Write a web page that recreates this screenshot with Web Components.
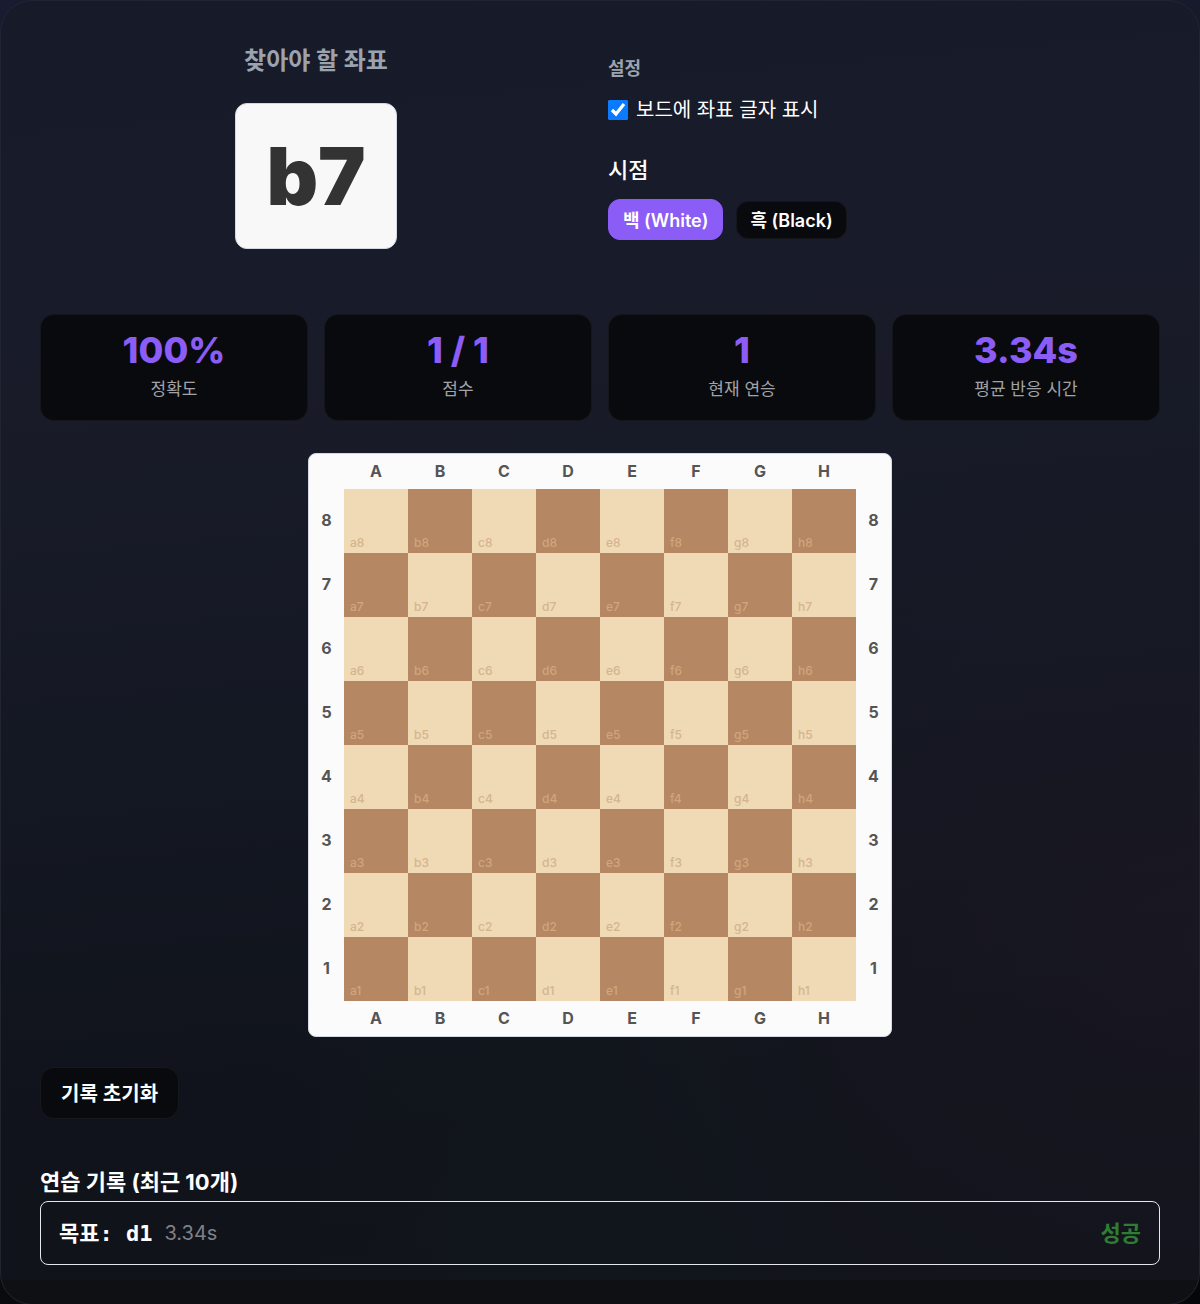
<!DOCTYPE html>
<html lang="ko">
<head>
<meta charset="utf-8">
<meta name="viewport" content="width=device-width, initial-scale=1">
<title>좌표 연습</title>
<style>
    * { box-sizing: border-box; }
    body {
        margin: 0;
        min-height: 100vh;
        background: linear-gradient(170deg, #191b31 0%, #12151f 50%, #050608 100%);
        color: #fff;
        font-family: Inter, "Noto Sans CJK KR", sans-serif;
        font-size: 20px;
    }
</style>
</head>
<body>
<coord-trainer>
    <target-square slot="target" value="b7">찾아야 할 좌표</target-square>
    <trainer-settings slot="settings"></trainer-settings>
    <stat-card slot="stats" value="100%">정확도</stat-card>
    <stat-card slot="stats" value="1 / 1">점수</stat-card>
    <stat-card slot="stats" value="1">현재 연승</stat-card>
    <stat-card slot="stats" value="3.34s">평균 반응 시간</stat-card>
    <chess-board slot="board"></chess-board>
    <practice-log slot="log">
        <log-entry target="d1" time="3.34s">성공</log-entry>
    </practice-log>
</coord-trainer>

<script>
class CoordTrainer extends HTMLElement {
    constructor() {
        super();
        this.attachShadow({ mode: "open" });
    }

    connectedCallback() {
        this.shadowRoot.innerHTML = `
        <style>
        * { box-sizing: border-box; }
        :host { display: block; }
        main {
            min-height: 100vh;
            padding: 39px;
            border: 1px solid #22252f;
            border-radius: 32px;
            background:
                linear-gradient(#0f1013, #0f1013) bottom / 100% 24px no-repeat,
                radial-gradient(ellipse at 100% 72%, #1c1824aa 0%, transparent 40%),
                radial-gradient(ellipse at 50% 92%, #11191d88 0%, transparent 40%),
                linear-gradient(175deg, #171b29 0%, #191b29 28%, #141823 55%, #10131b 80%, #11131a 100%);
        }
        .top {
            display: grid;
            grid-template-columns: 1fr 1fr;
            gap: 16px;
            margin-bottom: 65px;
        }
        .stats {
            display: grid;
            grid-template-columns: repeat(4, 1fr);
            gap: 16px;
            margin-bottom: 32px;
        }
        .reset {
            display: block;
            margin: 30px 0 44px;
            height: 52px;
            padding: 0 20px 2px;
            border: 1px solid #15181c;
            border-radius: 14px;
            background: #090a0d;
            color: #fff;
            font: inherit;
            font-weight: 600;
            cursor: pointer;
        }
        </style>
        <main>
            <section class="top">
                <slot name="target"></slot>
                <slot name="settings"></slot>
            </section>
            <section class="stats"><slot name="stats"></slot></section>
            <slot name="board"></slot>
            <button class="reset" type="button">기록 초기화</button>
            <slot name="log"></slot>
        </main>
        `;
    }
}

class TargetSquare extends HTMLElement {
    constructor() {
        super();
        this.attachShadow({ mode: "open" });
    }

    connectedCallback() {
        this.shadowRoot.innerHTML = `
        <style>
        :host {
            display: flex;
            flex-direction: column;
            align-items: center;
        }
        h2 {
            margin: 3px 0 24px;
            color: #9ca3af;
            font-size: 24px;
            font-weight: 700;
            line-height: 36px;
        }
        .value {
            padding: 0 30px;
            border: 1px solid #d5d7e2;
            border-radius: 12px;
            background: #f8f8f8;
            color: #333;
            font-size: 80px;
            font-weight: 900;
            line-height: 144px;
        }
        </style>
        <h2><slot></slot></h2>
        <div class="value">${this.getAttribute("value")}</div>
        `;
    }
}

class TrainerSettings extends HTMLElement {
    constructor() {
        super();
        this.attachShadow({ mode: "open" });
    }

    connectedCallback() {
        this.render();
    }

    render() {
        this.shadowRoot.innerHTML = `
        <style>
        :host { display: block; }
        h3 {
            margin: 15px 0 13px;
            color: #9ca3af;
            font-size: 18px;
            font-weight: 600;
            line-height: 28px;
        }
        label {
            display: flex;
            align-items: center;
            gap: 8px;
            line-height: 28px;
        }
        input {
            width: 20px;
            height: 20px;
            margin: 0;
            accent-color: #0a7aff;
        }
        h4 {
            margin: 30px 0 13px;
            font-size: 22px;
            font-weight: 500;
            line-height: 32px;
        }
        .sides {
            display: flex;
            align-items: center;
            gap: 13px;
        }
        button {
            height: 38px;
            padding: 0 13px 2px;
            border: 1px solid #14161b;
            border-radius: 12px;
            background: #090a0d;
            color: #fff;
            font: inherit;
            font-size: 18px;
            font-weight: 600;
            cursor: pointer;
        }
        button.active {
            height: 41px;
            padding: 0 14px 2px;
            border-color: #8b5cf6;
            background: #8b5cf6;
        }
        </style>
        <h3>설정</h3>
        <label><input type="checkbox" checked>보드에 좌표 글자 표시</label>
        <h4>시점</h4>
        <div class="sides">
            <button type="button" class="active">백 (White)</button>
            <button type="button">흑 (Black)</button>
        </div>
        `;

        const buttons = this.shadowRoot.querySelectorAll("button");
        buttons.forEach((btn) => {
            btn.addEventListener("click", () => {
                buttons.forEach((b) => b.classList.toggle("active", b === btn));
            });
        });
    }
}

class StatCard extends HTMLElement {
    constructor() {
        super();
        this.attachShadow({ mode: "open" });
    }

    connectedCallback() {
        this.shadowRoot.innerHTML = `
        <style>
        :host {
            display: block;
            box-sizing: border-box;
            padding: 15px 8px 17px;
            border: 1px solid #14161b;
            border-radius: 14px;
            background: #090a0d;
            text-align: center;
        }
        .value {
            color: #8b5cf6;
            font-size: 36px;
            font-weight: 800;
            line-height: 40px;
        }
        .label {
            margin-top: 5px;
            color: #a1a3a8;
            font-size: 17px;
            line-height: 28px;
        }
        </style>
        <div class="value">${this.getAttribute("value")}</div>
        <div class="label"><slot></slot></div>
        `;
    }
}

class ChessBoard extends HTMLElement {
    constructor() {
        super();
        this.attachShadow({ mode: "open" });
        this.files = ["a", "b", "c", "d", "e", "f", "g", "h"];
        this.ranks = [8, 7, 6, 5, 4, 3, 2, 1];
    }

    connectedCallback() {
        this.render();
    }

    render() {
        const letters = `<span></span>${this.files
            .map((f) => `<span class="edge">${f.toUpperCase()}</span>`)
            .join("")}<span></span>`;

        const rows = this.ranks
            .map((rank, y) => {
                const squares = this.files
                    .map((file, x) => `<div class="square ${(x + y) % 2 ? "dark" : "light"}">${file}${rank}</div>`)
                    .join("");
                return `<span class="edge">${rank}</span>${squares}<span class="edge">${rank}</span>`;
            })
            .join("");

        this.shadowRoot.innerHTML = `
        <style>
        :host { display: block; }
        .board {
            box-sizing: border-box;
            display: grid;
            grid-template-columns: 35px repeat(8, 1fr) 35px;
            grid-template-rows: 35px repeat(8, auto) 35px;
            max-width: 584px;
            margin: 0 auto;
            border: 1px solid #d5d7e2;
            border-radius: 8px;
            background: #fbfbfb;
        }
        .edge {
            display: flex;
            align-items: center;
            justify-content: center;
            padding-bottom: 2px;
            color: #555;
            font-size: 16px;
            font-weight: 700;
        }
        .square {
            display: flex;
            align-items: flex-end;
            aspect-ratio: 1;
            box-sizing: border-box;
            padding: 0 6px 3px;
            font-size: 12px;
            font-weight: 500;
            line-height: 14px;
        }
        .light {
            background: #f0d9b5;
            color: #d5b48e;
        }
        .dark {
            background: #b58863;
            color: #d0a57f;
        }
        </style>
        <div class="board">${letters}${rows}${letters}</div>
        `;
    }
}

class PracticeLog extends HTMLElement {
    constructor() {
        super();
        this.attachShadow({ mode: "open" });
    }

    connectedCallback() {
        this.shadowRoot.innerHTML = `
        <style>
        :host { display: block; }
        h3 {
            margin: 0;
            font-size: 22px;
            font-weight: 700;
            line-height: 38px;
        }
        </style>
        <h3>연습 기록 (최근 10개)</h3>
        <slot></slot>
        `;
    }
}

class LogEntry extends HTMLElement {
    constructor() {
        super();
        this.attachShadow({ mode: "open" });
    }

    connectedCallback() {
        this.shadowRoot.innerHTML = `
        <style>
        :host {
            display: flex;
            align-items: center;
            gap: 12px;
            box-sizing: border-box;
            height: 64px;
            padding: 0 18px;
            border: 1px solid #e5e7eb;
            border-radius: 8px;
        }
        .target, .result {
            padding-bottom: 4px;
            font-size: 22px;
            font-weight: 700;
        }
        .target {
            font-family: "DejaVu Sans Mono", "Noto Sans CJK KR", monospace;
        }
        .time { color: #7f8186; }
        .result {
            margin-left: auto;
            color: #2e7d32;
        }
        </style>
        <span class="target">목표: ${this.getAttribute("target")}</span>
        <span class="time">${this.getAttribute("time")}</span>
        <span class="result"><slot></slot></span>
        `;
    }
}

customElements.define("coord-trainer", CoordTrainer);
customElements.define("target-square", TargetSquare);
customElements.define("trainer-settings", TrainerSettings);
customElements.define("stat-card", StatCard);
customElements.define("chess-board", ChessBoard);
customElements.define("practice-log", PracticeLog);
customElements.define("log-entry", LogEntry);
</script>
</body>
</html>
